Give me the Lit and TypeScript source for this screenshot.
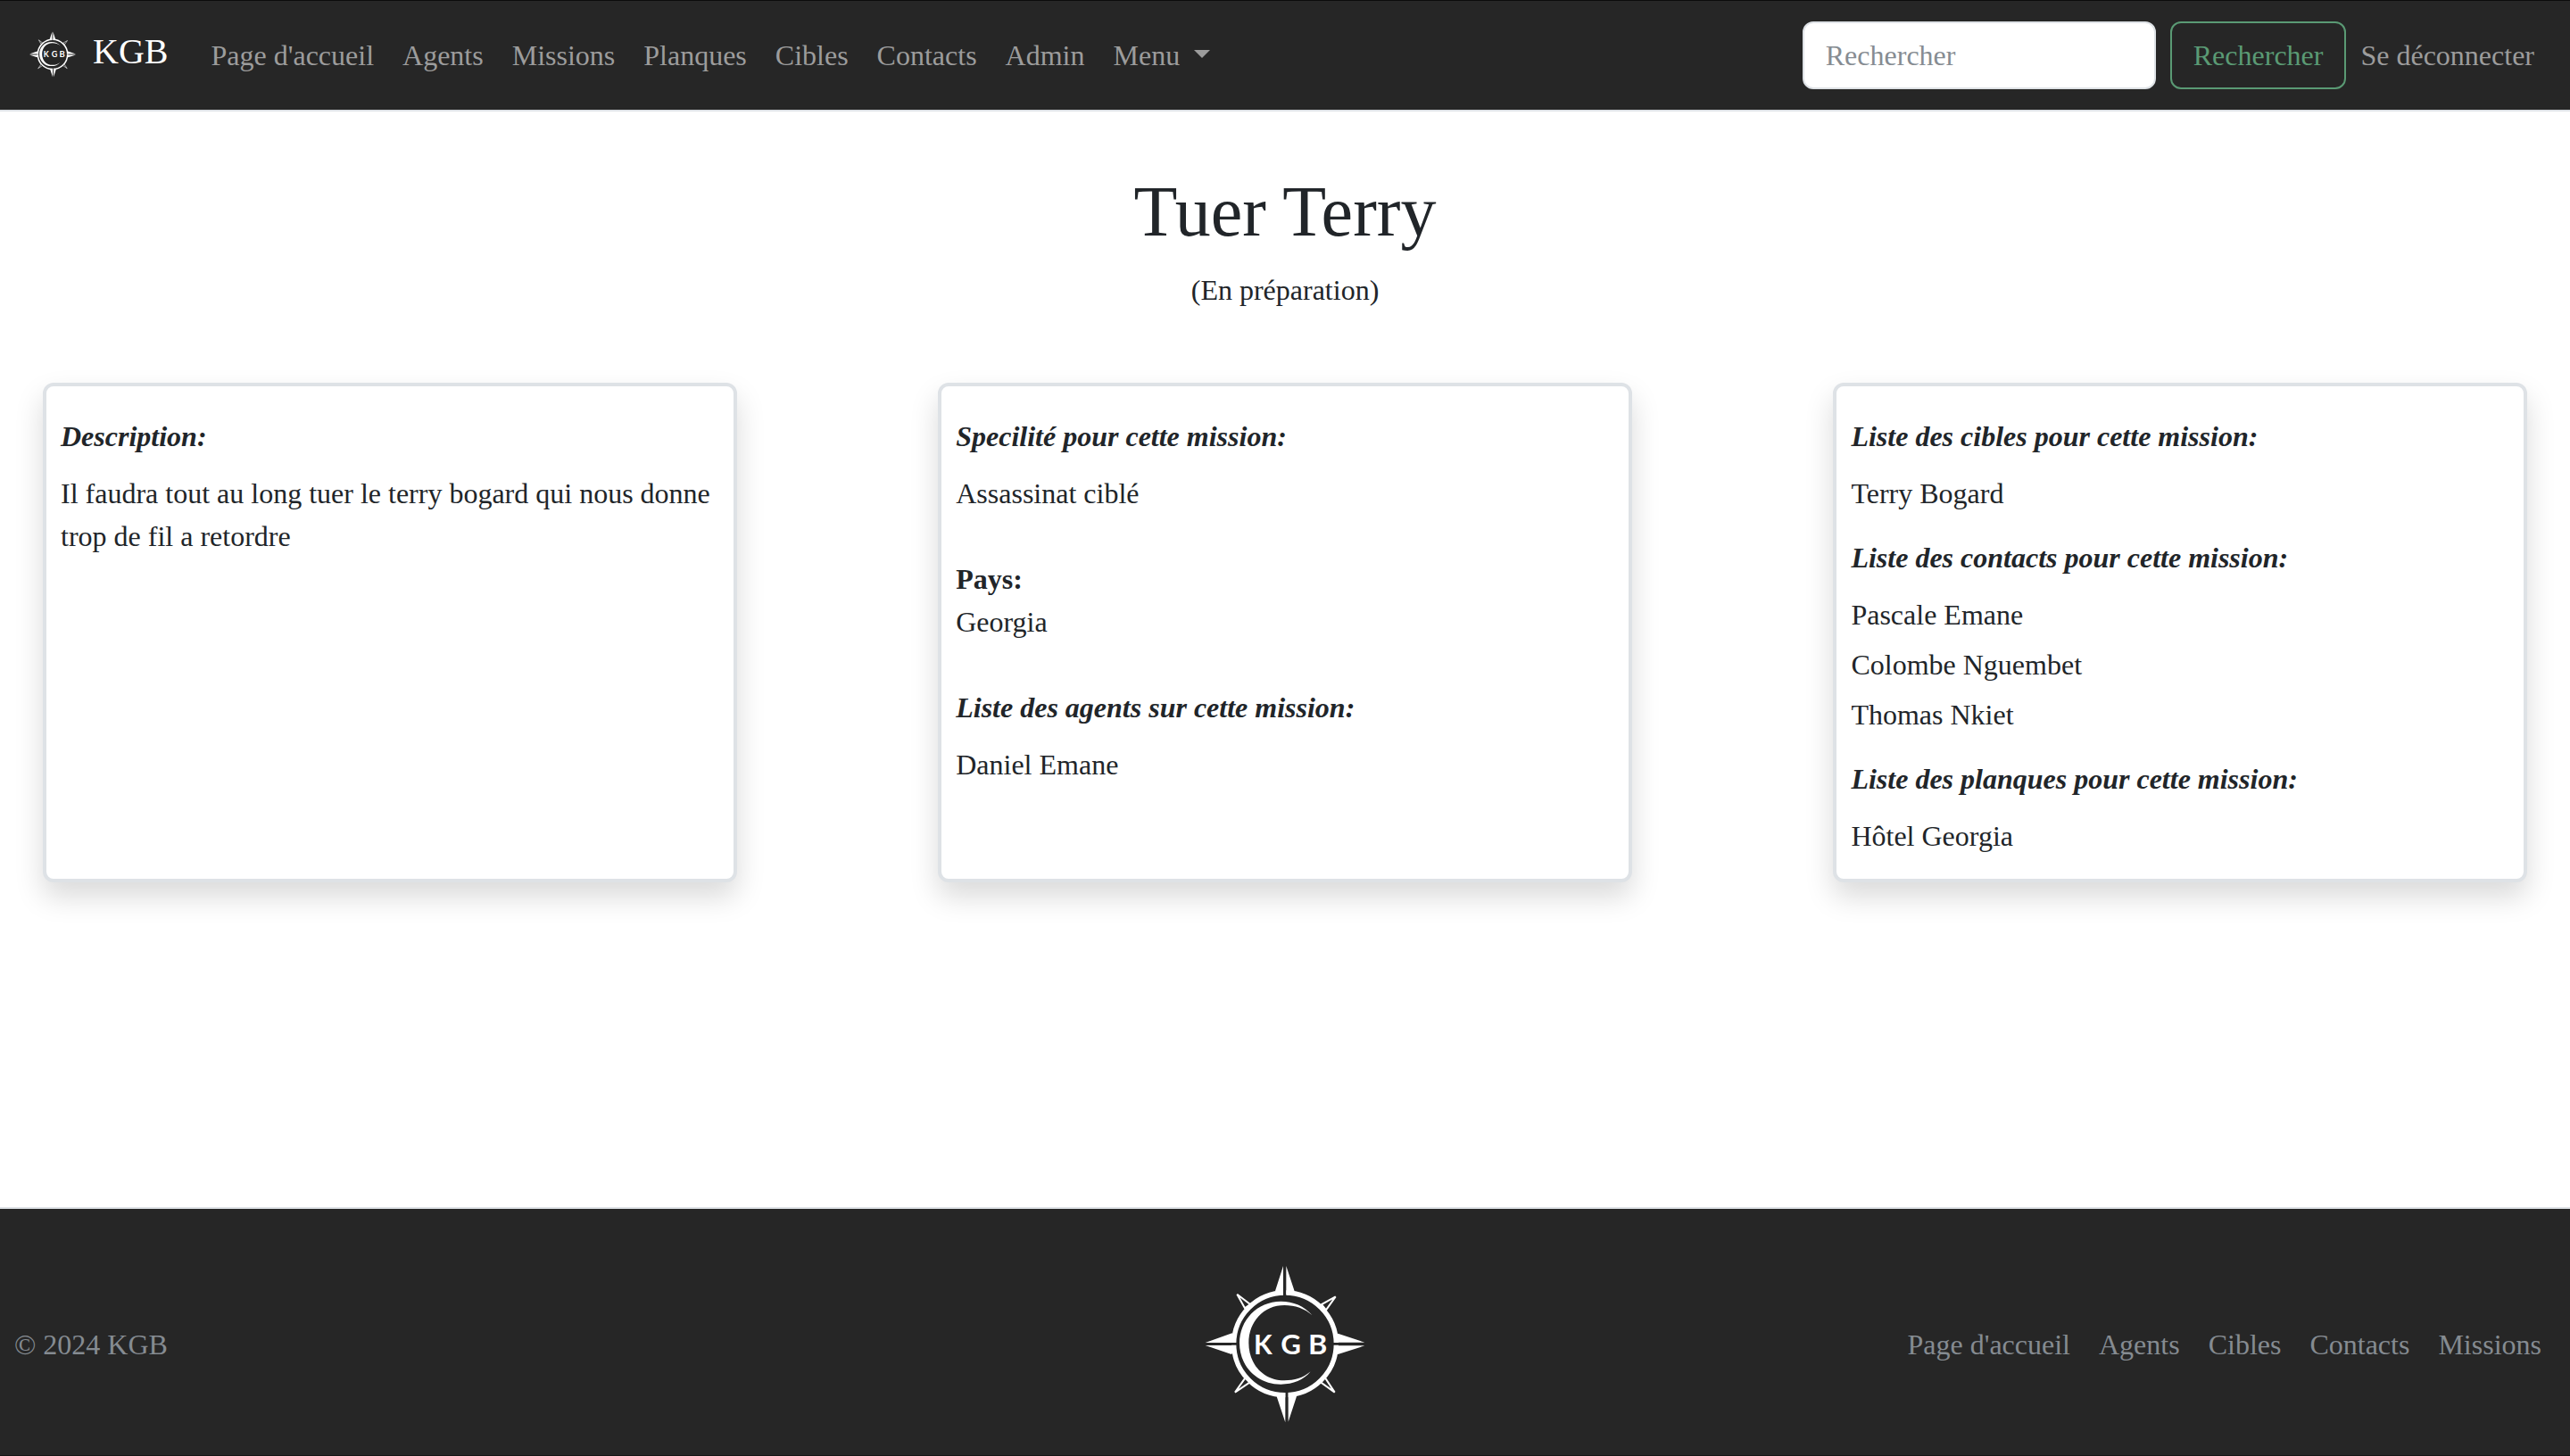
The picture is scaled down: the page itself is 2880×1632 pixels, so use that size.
import { LitElement, html, css, svg } from "lit";
import { customElement, property } from "lit/decorators.js";

const NAV = ["Page d'accueil", "Agents", "Missions", "Planques", "Cibles", "Contacts", "Admin"];
const FOOT = ["Page d'accueil", "Agents", "Cibles", "Contacts", "Missions"];

@customElement("kgb-logo")
class KgbLogo extends LitElement {
  static styles = css`
    :host { display: block; }
    .mark { display: block; width: 100%; height: 100%; }
    .letters { font: 700 90px "Lato", "Liberation Sans", sans-serif; fill: #fff; }
  `;
  render() {
    return html`<svg class="mark" viewBox="0 0 720 660" fill="#fff">
      ${svg`
        <circle cx="360" cy="319" r="172" fill="none" stroke="#fff" stroke-width="16"/>
        <path d="M452 223 C424 191 388 176 346 176 C266 176 207 240 207 316 C207 394 266 455 346 455 C388 455 422 441 446 412 C420 434 392 442 358 442 C288 442 238 388 238 316 C238 244 288 189 358 189 C394 189 426 200 452 223 Z"/>
        <path fill="#262626" d="M354 130H364V160H354ZM361 478H371V505H361ZM175 315H200V323H175ZM520 315H545V323H520Z"/>
        <path d="M354 57 L354 153 L327 141 Z M364 57 L364 153 L392 142 Z"/>
        <path d="M361 583 L361 483 L332 496 Z M371 581 L371 483 L399 496 Z"/>
        <path d="M92 315 L195 315 L195 305 L182 283 Z M92 324 L195 324 L195 335 L180 354 Z"/>
        <path d="M628 314 L525 314 L525 305 L538 284 Z M628 325 L525 325 L525 335 L538 354 Z"/>
        <path fill="#262626" stroke="#fff" stroke-width="6" stroke-linejoin="miter" d="M199 152 L225 199 L243 186 Z M530 160 L483 186 L498 205 Z M192 482 L226 434 L241 449 Z M527 482 L481 449 L495 433 Z"/>
        <text class="letters" x="255" y="353" textLength="62" lengthAdjust="spacingAndGlyphs">K</text>
        <text class="letters" x="346" y="353" textLength="68" lengthAdjust="spacingAndGlyphs">G</text>
        <text class="letters" x="438" y="353" textLength="64" lengthAdjust="spacingAndGlyphs">B</text>
      `}
    </svg>`;
  }
}

@customElement("mission-list")
class MissionList extends LitElement {
  @property() heading = "";
  @property({ attribute: false }) items: string[] = [];
  static styles = css`
    :host { display: flow-root; }
    .heading { margin: 16px 0; font-weight: 700; font-style: italic; }
    .item { margin: 0 0 8px; }
  `;
  render() {
    return html`<p class="heading">${this.heading}</p>
      ${this.items.map((i) => html`<p class="item">${i}</p>`)}`;
  }
}

@customElement("app-root")
class AppRoot extends LitElement {
  static styles = css`
    :host {
      display: flex; flex-direction: column; height: 1632px; box-sizing: border-box;
      border-top: 1px solid #0c0c0c; border-bottom: 1px solid #161616;
      background: #fff; color: #212529;
      font: 32px/48px "Liberation Serif", "Times New Roman", serif;
    }
    .nav {
      display: flex; align-items: center; height: 124px; box-sizing: border-box;
      padding: 0 24px; background: #262626; border-bottom: 2px solid #dee2e6; color: #9c9c9c;
    }
    .small-logo { width: 70px; height: 64px; }
    .brand { margin: 0 32px 9px 10px; color: #fff; font-size: 40px; line-height: 60px; }
    .links { display: flex; flex: 1; align-items: center; }
    .link { padding: 0 16px; white-space: nowrap; }
    .caret {
      display: inline-block; margin-left: 8px; vertical-align: 8px;
      border-top: 9.6px solid; border-left: 9.6px solid transparent; border-right: 9.6px solid transparent;
    }
    .search, .button {
      box-sizing: border-box; height: 76px; padding: 12px 24px; margin: 0 16px 0 0;
      border-radius: 12px; font: inherit;
    }
    .search { width: 396px; border: 2px solid #dee2e6; background: #fff; }
    .search::placeholder { color: #868c92; opacity: 1; }
    .button { border: 2px solid #5a9a74; background: none; color: #5a9a74; }
    .logout { margin-right: 16px; white-space: nowrap; }
    .main { flex: 1; }
    .title { margin: 64px 0 16px; text-align: center; font-weight: 400; font-size: 80px; line-height: 96px; }
    .status { margin: 0; text-align: center; }
    .cards { display: flex; justify-content: space-between; padding: 80px 48px 0; }
    .card {
      box-sizing: border-box; width: 777.6px; height: 560px; padding: 16px;
      border: 4px solid #dee2e6; border-radius: 12px; background: #fff;
      box-shadow: 0 16px 32px rgba(0, 0, 0, 0.15);
    }
    .country { margin: 40px 0 32px; }
    .line { margin: 0; }
    .footer {
      display: grid; grid-template-columns: 1fr 240px 1fr; align-items: center;
      height: 278px; box-sizing: border-box; padding: 28px 16px 0;
      border-top: 2px solid #dee2e6; background: #262626; color: #858b91;
    }
    .big-logo { width: 240px; height: 220px; margin-top: 6px; }
    .foot-links { display: flex; justify-content: flex-end; }
  `;
  render() {
    return html`
      <nav class="nav">
        <kgb-logo class="small-logo"></kgb-logo>
        <span class="brand">KGB</span>
        <div class="links">
          ${NAV.map((l) => html`<a class="link">${l}</a>`)}
          <a class="link">Menu <span class="caret"></span></a>
        </div>
        <input class="search" placeholder="Rechercher" />
        <button class="button">Rechercher</button>
        <a class="logout">Se déconnecter</a>
      </nav>
      <main class="main">
        <h1 class="title">Tuer Terry</h1>
        <p class="status">(En préparation)</p>
        <div class="cards">
          <section class="card">
            <mission-list heading="Description:" .items=${["Il faudra tout au long tuer le terry bogard qui nous donne trop de fil a retordre"]}></mission-list>
          </section>
          <section class="card">
            <mission-list heading="Specilité pour cette mission:" .items=${["Assassinat ciblé"]}></mission-list>
            <div class="country"><b>Pays:</b><p class="line">Georgia</p></div>
            <mission-list heading="Liste des agents sur cette mission:" .items=${["Daniel Emane"]}></mission-list>
          </section>
          <section class="card">
            <mission-list heading="Liste des cibles pour cette mission:" .items=${["Terry Bogard"]}></mission-list>
            <mission-list heading="Liste des contacts pour cette mission:" .items=${["Pascale Emane", "Colombe Nguembet", "Thomas Nkiet"]}></mission-list>
            <mission-list heading="Liste des planques pour cette mission:" .items=${["Hôtel Georgia"]}></mission-list>
          </section>
        </div>
      </main>
      <footer class="footer">
        <span>© 2024 KGB</span>
        <kgb-logo class="big-logo"></kgb-logo>
        <div class="foot-links">${FOOT.map((l) => html`<a class="link">${l}</a>`)}</div>
      </footer>
    `;
  }
}
